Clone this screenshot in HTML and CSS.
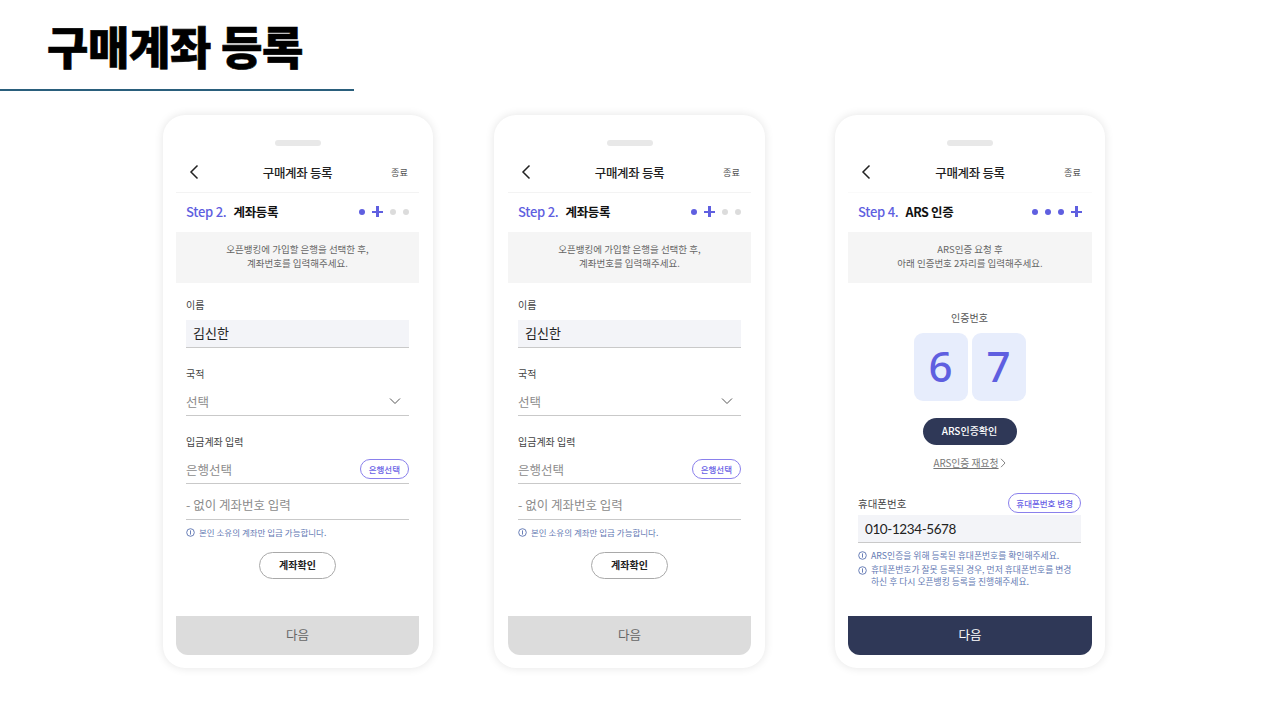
FILE: index.html
```html
<!DOCTYPE html>
<html lang="en">
<head>
<meta charset="UTF-8">
<title>구매계좌 등록</title>
<link rel="stylesheet" href="styles.css">
</head>
<body>
<div class="slide-head">
    <h1>구매계좌 등록</h1>
</div>

<div class="phones">
    <!-- Step 2 -->
    <div class="phone">
        <div class="grab"></div>
        <div class="top-bar">
            <svg class="back" width="12" height="16" viewBox="0 0 12 16"><path d="M9.5 1.5 L3 8 L9.5 14.5" fill="none" stroke="#222" stroke-width="1.5"/></svg>
            <span class="top-title">구매계좌 등록</span>
            <span class="top-end">종료</span>
        </div>
        <div class="step-row">
            <span class="step-no">Step 2.</span>
            <span class="step-name">계좌등록</span>
            <div class="dots">
                <i class="dot on"></i><i class="plus"></i><i class="dot"></i><i class="dot"></i>
            </div>
        </div>
        <div class="notice">오픈뱅킹에 가입할 은행을 선택한 후,<br>계좌번호를 입력해주세요.</div>
        <div class="form">
            <div class="label first">이름</div>
            <div class="filled">김신한</div>
            <div class="label">국적</div>
            <div class="line">
                <span class="ph">선택</span>
                <svg class="chev" width="12" height="8" viewBox="0 0 12 8"><path d="M1 1.5 L6 6.5 L11 1.5" fill="none" stroke="#555" stroke-width="1"/></svg>
            </div>
            <div class="label">입금계좌 입력</div>
            <div class="line">
                <span class="ph">은행선택</span>
                <span class="pill">은행선택</span>
            </div>
            <div class="line line-next"><span class="ph">- 없이 계좌번호 입력</span></div>
            <div class="info">
                <svg class="info-ic" width="9" height="9" viewBox="0 0 9 9"><circle cx="4.5" cy="4.5" r="3.8" fill="none" stroke="#5a72b0" stroke-width="0.9"/><path d="M4.5 2.4 V6.6" stroke="#5a72b0" stroke-width="0.9"/></svg>
                <span>본인 소유의 계좌만 입금 가능합니다.</span>
            </div>
            <div class="check-wrap"><span class="check-btn">계좌확인</span></div>
        </div>
        <div class="next">다음</div>
    </div>

    <!-- Step 2 again -->
    <div class="phone">
        <div class="grab"></div>
        <div class="top-bar">
            <svg class="back" width="12" height="16" viewBox="0 0 12 16"><path d="M9.5 1.5 L3 8 L9.5 14.5" fill="none" stroke="#222" stroke-width="1.5"/></svg>
            <span class="top-title">구매계좌 등록</span>
            <span class="top-end">종료</span>
        </div>
        <div class="step-row">
            <span class="step-no">Step 2.</span>
            <span class="step-name">계좌등록</span>
            <div class="dots">
                <i class="dot on"></i><i class="plus"></i><i class="dot"></i><i class="dot"></i>
            </div>
        </div>
        <div class="notice">오픈뱅킹에 가입할 은행을 선택한 후,<br>계좌번호를 입력해주세요.</div>
        <div class="form">
            <div class="label first">이름</div>
            <div class="filled">김신한</div>
            <div class="label">국적</div>
            <div class="line">
                <span class="ph">선택</span>
                <svg class="chev" width="12" height="8" viewBox="0 0 12 8"><path d="M1 1.5 L6 6.5 L11 1.5" fill="none" stroke="#555" stroke-width="1"/></svg>
            </div>
            <div class="label">입금계좌 입력</div>
            <div class="line">
                <span class="ph">은행선택</span>
                <span class="pill">은행선택</span>
            </div>
            <div class="line line-next"><span class="ph">- 없이 계좌번호 입력</span></div>
            <div class="info">
                <svg class="info-ic" width="9" height="9" viewBox="0 0 9 9"><circle cx="4.5" cy="4.5" r="3.8" fill="none" stroke="#5a72b0" stroke-width="0.9"/><path d="M4.5 2.4 V6.6" stroke="#5a72b0" stroke-width="0.9"/></svg>
                <span>본인 소유의 계좌만 입금 가능합니다.</span>
            </div>
            <div class="check-wrap"><span class="check-btn">계좌확인</span></div>
        </div>
        <div class="next">다음</div>
    </div>

    <!-- Step 4 -->
    <div class="phone">
        <div class="grab"></div>
        <div class="top-bar no-rule">
            <svg class="back" width="12" height="16" viewBox="0 0 12 16"><path d="M9.5 1.5 L3 8 L9.5 14.5" fill="none" stroke="#222" stroke-width="1.5"/></svg>
            <span class="top-title">구매계좌 등록</span>
            <span class="top-end">종료</span>
        </div>
        <div class="step-row">
            <span class="step-no">Step 4.</span>
            <span class="step-name">ARS 인증</span>
            <div class="dots">
                <i class="dot on"></i><i class="dot on"></i><i class="dot on"></i><i class="plus"></i>
            </div>
        </div>
        <div class="notice">ARS인증 요청 후<br>아래 인증번호 2자리를 입력해주세요.</div>
        <div class="form form-ars">
            <div class="code-label">인증번호</div>
            <div class="code-row">
                <span class="code-box">6</span>
                <span class="code-box">7</span>
            </div>
            <div class="check-wrap"><span class="ars-btn">ARS인증확인</span></div>
            <div class="retry"><span class="retry-text">ARS인증 재요청</span>
                <svg width="6" height="10" viewBox="0 0 6 10"><path d="M1 .8 L5 5 L1 9.2" fill="none" stroke="#777" stroke-width="0.9"/></svg>
            </div>
            <div class="phone-head">
                <span class="phone-label">휴대폰번호</span>
                <span class="pill">휴대폰번호 변경</span>
            </div>
            <div class="filled filled-num">010-1234-5678</div>
            <div class="info info-a">
                <svg class="info-ic" width="9" height="9" viewBox="0 0 9 9"><circle cx="4.5" cy="4.5" r="3.8" fill="none" stroke="#5a72b0" stroke-width="0.9"/><path d="M4.5 2.4 V6.6" stroke="#5a72b0" stroke-width="0.9"/></svg>
                <span>ARS인증을 위해 등록된 휴대폰번호를 확인해주세요.</span>
            </div>
            <div class="info info-b">
                <svg class="info-ic" width="9" height="9" viewBox="0 0 9 9"><circle cx="4.5" cy="4.5" r="3.8" fill="none" stroke="#5a72b0" stroke-width="0.9"/><path d="M4.5 2.4 V6.6" stroke="#5a72b0" stroke-width="0.9"/></svg>
                <span>휴대폰번호가 잘못 등록된 경우, 먼저 휴대폰번호를 변경<br>하신 후 다시 오픈뱅킹 등록을 진행해주세요.</span>
            </div>
        </div>
        <div class="next next-on">다음</div>
    </div>
</div>
</body>
</html>
```

FILE: styles.css
```css
* {
    box-sizing: border-box;
}
body {
    margin: 0;
    width: 1280px;
    height: 720px;
    overflow: hidden;
    background-color: #ffffff;
    font-family: "Noto Sans CJK KR", "Noto Sans", sans-serif;
    color: #222;
}

.slide-head {
    width: 354px;
    height: 91px;
    padding: 15px 0 0 47px;
    border-bottom: 2px solid #2a5f7c;
}
.slide-head h1 {
    margin: 0;
    font-size: 45px;
    line-height: 62px;
    font-weight: 900;
    letter-spacing: -0.4px;
    color: #000;
    -webkit-text-stroke: 0.6px #000;
}

.phones {
    display: flex;
    padding: 24px 0 0 163px;
}
.phone {
    display: flex;
    flex-direction: column;
    width: 270px;
    height: 553px;
    margin-right: 61px;
    padding: 25px 13px 13px;
    background-color: #fff;
    border-radius: 22px;
    box-shadow: 0 0 10px rgba(0, 0, 0, 0.11);
}
.phone:nth-child(1) {
    padding-right: 14px;
}
.phone:nth-child(2) {
    width: 271px;
    margin-right: 70px;
    padding-left: 14px;
    padding-right: 14px;
}

.grab {
    width: 46px;
    height: 6px;
    margin: 0 auto;
    background-color: #e8e8e8;
    border-radius: 3px;
}

.top-bar {
    display: grid;
    grid-template-columns: 1fr auto 1fr;
    align-items: center;
    height: 47px;
    padding: 6px 11px 0;
    border-bottom: 1px solid #f3f3f3;
}
.top-bar.no-rule {
    border-bottom-color: #fafafa;
}
.back {
    margin-left: 1px;
}
.top-title {
    font-size: 12.5px;
    font-weight: 500;
    letter-spacing: -0.35px;
}
.top-end {
    justify-self: end;
    font-size: 9.2px;
    color: #555;
}

.step-row {
    display: flex;
    align-items: center;
    height: 39px;
    padding: 0 10px 2px;
}
.step-no {
    font-size: 13px;
    font-weight: 500;
    letter-spacing: -0.25px;
    color: #5f5fe0;
    margin-right: 7px;
}
.step-name {
    font-size: 12.5px;
    font-weight: 700;
    letter-spacing: -0.35px;
    color: #111;
}
.dots {
    display: flex;
    align-items: center;
    gap: 7px;
    margin-left: auto;
}
.dot {
    width: 6px;
    height: 6px;
    border-radius: 50%;
    background-color: #dcdcdc;
}
.dot.on {
    background-color: #5f5fe0;
}
.plus {
    width: 11px;
    height: 11px;
    background:
        linear-gradient(#5f5fe0, #5f5fe0) center / 11px 2px no-repeat,
        linear-gradient(#5f5fe0, #5f5fe0) center / 3px 11px no-repeat;
}

.notice {
    height: 51px;
    padding-top: 11px;
    background-color: #f5f5f5;
    text-align: center;
    font-size: 9.5px;
    line-height: 13.5px;
    color: #666;
}

.form {
    flex: 1;
    padding: 0 10px;
}
.form-ars {
    padding-right: 11px;
}
.label {
    height: 15px;
    margin-top: 18px;
    font-size: 10px;
    line-height: 15px;
    color: #444;
}
.label.first {
    margin-top: 14px;
}
.filled {
    height: 28px;
    margin-top: 8px;
    padding-left: 7px;
    background-color: #f3f4f8;
    border-bottom: 1px solid #c9c9c9;
    font-size: 13px;
    line-height: 26px;
    color: #222;
}
.line {
    display: flex;
    align-items: center;
    justify-content: space-between;
    height: 29px;
    margin-top: 6px;
    border-bottom: 1px solid #c9c9c9;
}
.line-next {
    height: 32px;
    margin-top: 4px;
}
.ph {
    padding-top: 1px;
    font-size: 12.5px;
    color: #8c8c8c;
}
.chev {
    margin-right: 8px;
}
.pill {
    height: 20px;
    padding: 0 8px;
    background-color: #fff;
    border: 1px solid #8a80ec;
    border-radius: 10px;
    font-size: 8.5px;
    line-height: 18px;
    font-weight: 500;
    color: #6a62e6;
}

.info {
    display: flex;
    align-items: flex-start;
    gap: 4px;
    margin-top: 6px;
    font-size: 8.5px;
    line-height: 13px;
    color: #647ab4;
}
.info-ic {
    flex: none;
    margin-top: 2px;
}

.check-wrap {
    display: flex;
    justify-content: center;
    margin-top: 13px;
}
.check-btn {
    width: 77px;
    height: 27px;
    background-color: #fff;
    border: 1px solid #a9a9a9;
    border-radius: 14px;
    text-align: center;
    font-size: 10px;
    line-height: 24px;
    font-weight: 700;
    color: #222;
}

.code-label {
    height: 15px;
    margin-top: 27px;
    text-align: center;
    font-size: 10px;
    line-height: 15px;
    color: #555;
}
.code-row {
    display: flex;
    justify-content: center;
    gap: 4px;
    margin-top: 8px;
}
.code-box {
    width: 54px;
    height: 68px;
    background-color: #e7edfc;
    border-radius: 9px;
    text-align: center;
    font-family: "Noto Sans", sans-serif;
    font-size: 42px;
    font-weight: 500;
    line-height: 66px;
    color: #5f5fe0;
}
.ars-btn {
    width: 94px;
    height: 27px;
    margin-top: 4px;
    background-color: #2f3857;
    border-radius: 14px;
    text-align: center;
    font-size: 10px;
    line-height: 26px;
    font-weight: 500;
    color: #fff;
}
.retry {
    display: flex;
    align-items: center;
    justify-content: center;
    gap: 1px;
    height: 14px;
    margin-top: 11px;
    font-size: 9.8px;
    line-height: 14px;
    color: #777;
}
.retry-text {
    text-decoration: underline;
}
.phone-head {
    display: flex;
    align-items: center;
    justify-content: space-between;
    margin-top: 23px;
}
.phone-head .pill {
    padding: 0 7px;
}
.phone-label {
    font-size: 10.5px;
    color: #444;
}
.filled-num {
    margin-top: 2px;
    font-family: Lato, sans-serif;
    font-size: 13.5px;
    line-height: 28px;
    letter-spacing: -0.4px;
}
.info-a {
    margin-top: 6px;
    font-size: 8.8px;
}
.info-b {
    margin-top: 1.5px;
    font-size: 8.8px;
    line-height: 12.5px;
}

.next {
    height: 39px;
    background-color: #dcdcdc;
    border-radius: 0 0 12px 12px;
    text-align: center;
    font-size: 12.5px;
    line-height: 37px;
    color: #666;
}
.next-on {
    background-color: #2f3857;
    color: #fff;
}
```
